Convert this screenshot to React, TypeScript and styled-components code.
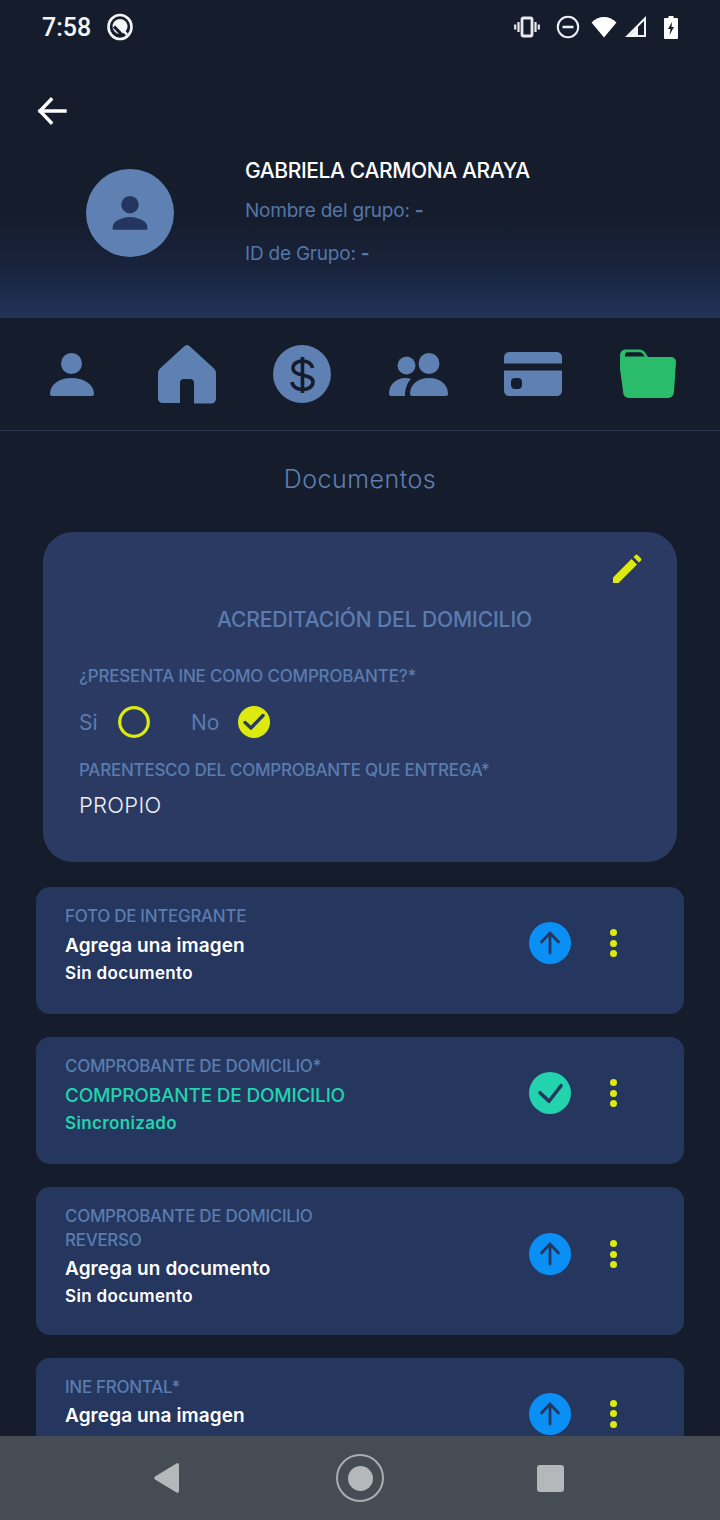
import React from "react";
import styled, { createGlobalStyle } from "styled-components";

const Global = createGlobalStyle`
  html, body { margin: 0; padding: 0; background: #151c2c; }
  * { box-sizing: border-box; }
  body { font-family: "Inter", "Liberation Sans", sans-serif; }
`;

const Page = styled.div`
  width: 720px; height: 1520px; display: flex; flex-direction: column; overflow: hidden; background: #151c2c;
`;
const Header = styled.header`
  height: 319px; flex: none; display: flex; flex-direction: column;
  background: linear-gradient(180deg, #151c2c 0%, #151c2c 68%, #18233c 84%, #22345a 100%);
  border-bottom: 1px solid #141b2b;
`;
const StatusBar = styled.div`
  height: 54px; flex: none; display: flex; align-items: center; padding: 0 42px 0 42px; color: #fff;
`;
const Time = styled.span`
  font-family: "Roboto", sans-serif; font-size: 25px; font-weight: 500; color: #f4f5f6; width: 65px;
`;
const StatusIcons = styled.div`
  margin-left: auto; display: flex; align-items: center;
`;
const StatusIcon = styled.span<{ $gap: number }>`
  display: flex; margin-left: ${p => p.$gap}px;
`;
const BackButton = styled.div`
  height: 50px; margin-top: 31px; padding-left: 36px; display: flex; align-items: center;
`;
const Profile = styled.div`
  display: flex; padding: 0 0 0 86px; margin-top: 22px;
`;
const Avatar = styled.div`
  width: 88px; height: 88px; margin-top: 12px; border-radius: 50%; background: #5f80b2;
  display: flex; align-items: center; justify-content: center; flex: none;
`;
const ProfileText = styled.div`
  margin-left: 71px; display: flex; flex-direction: column;
`;
const Name = styled.div`
  color: #fff; font-size: 21px; font-weight: 500; line-height: 28px; letter-spacing: -0.37px; height: 28px;
`;
const Meta = styled.div`
  color: #5576a8; font-size: 19px; line-height: 26px; margin-top: 13px; letter-spacing: -0.22px;
  & + & { margin-top: 17px; }
  b { font-weight: 700; }
`;
const Tabs = styled.nav`
  height: 112px; flex: none; display: flex; align-items: flex-start; padding: 25px 36px 0 36px;
  justify-content: space-between; border-bottom: 1px solid #2a3650;
`;
const Tab = styled.div`
  width: 72px; height: 60px; display: flex; align-items: center; justify-content: center;
`;
const Scroll = styled.main`
  flex: 1; min-height: 0; overflow: hidden; display: flex; flex-direction: column; align-items: center;
`;
const Title = styled.h1`
  margin: 32px 0 0; color: #5d7fb2; font-size: 25px; line-height: 32px; font-weight: 300; letter-spacing: 0.5px;
`;
const AddressCard = styled.section`
  position: relative; width: 634px; height: 330px; flex: none; margin-top: 37px; padding: 73px 36px 0;
  background: #2b3a63; border-radius: 30px;
`;
const EditIcon = styled.div`
  position: absolute; top: 21px; right: 34px; width: 32px; height: 32px;
`;
const CardTitle = styled.h2`
  margin: 0; color: #5a7cae; font-size: 21px; line-height: 30px; font-weight: 500; text-align: center; letter-spacing: -0.1px;
  padding-left: 29px;
`;
const FieldLabel = styled.div`
  color: #5a7cae; font-size: 17px; line-height: 22px; font-weight: 500;
`;
const QuestionLabel = styled(FieldLabel)`
  margin-top: 30px; letter-spacing: -0.2px;
`;
const Options = styled.div`
  display: flex; align-items: center; height: 32px; margin-top: 19px;
`;
const Option = styled.div<{ $wide?: boolean }>`
  display: flex; align-items: center; width: 112px; gap: ${p => (p.$wide ? 27 : 19)}px;
  color: #5a7cae; font-size: 21px;
`;
const OptionText = styled.span`
  width: 20px; white-space: nowrap;
`;
const RelationLabel = styled(FieldLabel)`
  margin-top: 21px; letter-spacing: -0.25px;
`;
const Value = styled.div`
  color: #eef1f6; font-size: 22px; line-height: 30px; margin-top: 9px; letter-spacing: 0.3px; font-weight: 300;
`;
const DocList = styled.div`
  width: 648px; flex: none; margin-top: 25px; display: flex; flex-direction: column; gap: 23px;
`;
const DocCard = styled.article`
  background: #25365f; border-radius: 14px; padding: 18px 0 0 29px; display: flex; position: relative;
  min-height: 127px; flex: none;
`;
const DocText = styled.div`
  width: 300px; flex: none; padding-bottom: 25.5px;
`;
const DocLabel = styled.div`
  color: #5a7cae; font-size: 17px; line-height: 23.5px; font-weight: 500; letter-spacing: -0.3px; white-space: nowrap;
`;
const DocTitle = styled.div<{ $ok?: boolean }>`
  color: ${p => (p.$ok ? "#22d3ae" : "#fff")}; font-size: 19px; line-height: 28px; font-weight: ${p => (p.$ok ? 500 : 600)}; margin-top: 3px; white-space: nowrap;
  letter-spacing: ${p => (p.$ok ? -0.2 : 0.1)}px;
`;
const DocState = styled.div<{ $ok?: boolean }>`
  color: ${p => (p.$ok ? "#22d3ae" : "#fff")}; font-size: 17px; line-height: 26px; font-weight: 600; letter-spacing: 0.35px;
`;
const Actions = styled.div<{ $top: number }>`
  position: absolute; top: ${p => p.$top}px; left: 493px; display: flex; align-items: center; gap: 39px;
`;
const StatusCircle = styled.div<{ $ok?: boolean }>`
  width: 42px; height: 42px; border-radius: 50%; background: ${p => (p.$ok ? "#22d3ae" : "#0a90f5")};
  display: flex; align-items: center; justify-content: center;
`;
const Dots = styled.div`
  display: flex; flex-direction: column; gap: 3.5px;
  span { width: 7px; height: 7px; border-radius: 50%; background: #dcea10; display: block; }
`;
const NavBar = styled.div`
  height: 84px; flex: none; background: #454c53; display: flex; align-items: center; padding-left: 154px; position: relative;
`;
const NavBack = styled.div`
  width: 25px; display: flex;
`;
const NavHome = styled.div`
  margin-left: 157px; width: 48px; height: 48px; border-radius: 50%; border: 2.5px solid #a9aeb1;
  display: flex; align-items: center; justify-content: center;
`;
const NavHomeDot = styled.div`
  width: 25px; height: 25px; border-radius: 50%; background: #b4b8ba;
`;
const NavSquare = styled.div`
  margin-left: 153px; width: 27px; height: 27px; border-radius: 3px; background: #b4b8ba;
`;

const Blue = "#5f80b2";

const docs: { label: string[]; title: string; state?: string; ok?: boolean; top: number }[] = [
  { label: ["FOTO DE INTEGRANTE"], title: "Agrega una imagen", state: "Sin documento", top: 35 },
  { label: ["COMPROBANTE DE DOMICILIO*"], title: "COMPROBANTE DE DOMICILIO", state: "Sincronizado", ok: true, top: 35 },
  { label: ["COMPROBANTE DE DOMICILIO", "REVERSO"], title: "Agrega un documento", state: "Sin documento", top: 46 },
  { label: ["INE FRONTAL*"], title: "Agrega una imagen", top: 35 },
];

export default function App() {
  return (
    <Page>
      <Global />
      <Header>
        <StatusBar>
          <Time>7:58</Time>
          <svg width="26" height="28" viewBox="0 0 26 28" fill="none">
            <ellipse cx="13" cy="14" rx="11.500" ry="12" stroke="#f4f5f6" strokeWidth="2.600" />
            <circle cx="13" cy="13.500" r="7.500" fill="#f4f5f6" />
            <path d="M7 13.500 16 23" stroke="#151c2c" strokeWidth="3.200" />
            <path d="M11.500 13 20 21.500" stroke="#f4f5f6" strokeWidth="2.500" />
          </svg>
          <StatusIcons>
            <StatusIcon $gap={0}>
              <svg width="26" height="24" viewBox="0 0 26 24" fill="none" stroke="#e8eaee" strokeWidth="2.200">
                <rect x="8" y="3" width="10" height="18" rx="1.500" strokeWidth="2.800" />
                <path d="M4.500 7v10M1.200 9.500v5M21.500 7v10M24.800 9.500v5" />
              </svg>
            </StatusIcon>
            <StatusIcon $gap={16}>
              <svg width="24" height="24" viewBox="0 0 24 24" fill="none" stroke="#f0f1f4" strokeWidth="2">
                <circle cx="12" cy="12" r="10.200" />
                <path d="M6.500 12h11" strokeWidth="2.500" />
              </svg>
            </StatusIcon>
            <StatusIcon $gap={11}>
              <svg width="26" height="22" viewBox="0 0 26 22">
                <path d="M13 21.500 0.500 6.500C4 3 8 1 13 1s9 2 12.500 5.500Z" fill="#fff" />
              </svg>
            </StatusIcon>
            <StatusIcon $gap={8}>
              <svg width="22" height="22" viewBox="0 0 22 22" fill="none">
                <path d="M20 2.500V20H2.500Z" stroke="#f4f5f6" strokeWidth="2" />
                <path d="M13 10 3 21h10Z" fill="#f4f5f6" />
              </svg>
            </StatusIcon>
            <StatusIcon $gap={17}>
              <svg width="14" height="24" viewBox="0 0 14 24">
                <path d="M4.500 1h5v2H13a1 1 0 0 1 1 1v19a1 1 0 0 1-1 1H1a1 1 0 0 1-1-1V4a1 1 0 0 1 1-1h3.500Z" fill="#fff" />
                <path d="M8 7 4 14h2.500L5.500 20 10 12H7.500Z" fill="#151c2c" />
              </svg>
            </StatusIcon>
          </StatusIcons>
        </StatusBar>
        <BackButton>
          <svg width="34" height="34" viewBox="0 0 34 34" fill="none" stroke="#fff" strokeWidth="3.400" strokeLinecap="square">
            <path d="M4 18h25M15 6.500 4 18l11 11.500" />
          </svg>
        </BackButton>
        <Profile>
          <Avatar>
            <svg width="50" height="50" viewBox="0 0 24 24" fill="#243660">
              <circle cx="12" cy="8" r="4.200" />
              <path d="M3.700 20v-1.500c0-3 5.500-4.600 8.300-4.600s8.300 1.600 8.300 4.600V20Z" />
            </svg>
          </Avatar>
          <ProfileText>
            <Name>GABRIELA CARMONA ARAYA</Name>
            <Meta>Nombre del grupo: <b>-</b></Meta>
            <Meta>ID de Grupo: <b>-</b></Meta>
          </ProfileText>
        </Profile>
      </Header>
      <Tabs>
        <Tab>
          <svg width="46" height="46" viewBox="0 0 46 46" fill={Blue}>
            <circle cx="22.500" cy="12.500" r="10.500" />
            <path d="M1 43c0-9 8-16 21.500-16S45 34 45 43c0 1-1 2-2 2H3c-1 0-2-1-2-2Z" />
          </svg>
        </Tab>
        <Tab>
          <svg width="60" height="60" viewBox="0 0 60 60" fill={Blue}>
            <path fillRule="evenodd" d="M30 1c1 0 2 .5 3 1.500l24 22c1.500 1.500 2 3 2 5v25c0 3-2 5-5 5H37V39c0-2.500-1.500-4-4-4h-6c-2.500 0-4 1.500-4 4v20H6c-3 0-5-2-5-5V29.500c0-2 .5-3.500 2-5l24-22c1-1 2-1.500 3-1.500Z" />
          </svg>
        </Tab>
        <Tab>
          <svg width="60" height="60" viewBox="0 0 60 60">
            <circle cx="30" cy="30" r="29" fill={Blue} />
            <path d="M40.500 24c-.5-4-4.500-7-10-7-5.500 0-9.500 3-9.500 7 0 9.500 20 5 20 14 0 4.500-4.500 7.500-10.500 7.500-5.500 0-10-3-10.500-7.500M30.500 13v36" fill="none" stroke="#151c2c" strokeWidth="3.600" />
          </svg>
        </Tab>
        <Tab>
          <svg width="60" height="48" viewBox="0 0 60 48" fill={Blue}>
            <circle cx="41" cy="13.500" r="10.500" />
            <circle cx="18.500" cy="15.500" r="9" />
            <path d="M1 44c0-9 6-15 15-16 2 0 5 0 7 1-4 4-6 10-6 16 0 .5 0 1 .2 1H3c-1 0-2-1-2-2Z" />
            <path d="M22 44c0-9 7-16 19-16s19 7 19 16c0 1-1 2-2 2H24c-1 0-2-1-2-2Z" />
          </svg>
        </Tab>
        <Tab>
          <svg width="60" height="46" viewBox="0 0 60 46" fill={Blue}>
            <path d="M1 12.500V7c0-4 2-6 6-6h46c4 0 6 2 6 6v5.500Z" />
            <path fillRule="evenodd" d="M1 19.500h58V39c0 4-2 6-6 6H7c-4 0-6-2-6-6Zm11 7.500c-2.500 0-4 1.500-4 4v3c0 2.500 1.500 4 4 4h3c2.500 0 4-1.500 4-4v-3c0-2.500-1.500-4-4-4Z" />
          </svg>
        </Tab>
        <Tab>
          <svg width="58" height="50" viewBox="0 0 58 50" fill="#2abb6b">
            <path fillRule="evenodd" d="M1 14V7C1 3 3 .5 7 .5h13c3 0 4.500 1 6 3L29 8h22c4 0 6 2 6 5l-2 29c0 4-2 7-6 7H10c-4 0-6-3-6-7L1 20Zm5-6.500h20l-2.500-3c-1-1-2-1.200-3.500-1.200H8c-1.200 0-2 1-2 4.200Z" />
          </svg>
        </Tab>
      </Tabs>
      <Scroll>
        <Title>Documentos</Title>
        <AddressCard>
          <EditIcon>
            <svg width="32" height="32" viewBox="0 0 32 32" fill="#dcea10">
              <path d="M2 24.500 20.500 6l5.500 5.500L7.500 30H2Z" />
              <path d="M22.500 4l2-2a1.500 1.500 0 0 1 2 0l3.500 3.500a1.500 1.500 0 0 1 0 2l-2 2Z" />
            </svg>
          </EditIcon>
          <CardTitle>ACREDITACIÓN DEL DOMICILIO</CardTitle>
          <QuestionLabel>¿PRESENTA INE COMO COMPROBANTE?*</QuestionLabel>
          <Options>
            <Option>
              <OptionText>Si</OptionText>
              <svg width="32" height="32" viewBox="0 0 32 32" fill="none">
                <circle cx="16" cy="16" r="14.300" stroke="#dcea10" strokeWidth="3.200" />
              </svg>
            </Option>
            <Option $wide>
              <OptionText>No</OptionText>
              <svg width="32" height="32" viewBox="0 0 32 32">
                <circle cx="16" cy="16" r="16" fill="#dcea10" />
                <path d="M7 16.500 13 22 25 9.500" fill="none" stroke="#2b3a63" strokeWidth="3.400" strokeLinecap="round" strokeLinejoin="round" />
              </svg>
            </Option>
          </Options>
          <RelationLabel>PARENTESCO DEL COMPROBANTE QUE ENTREGA*</RelationLabel>
          <Value>PROPIO</Value>
        </AddressCard>
        <DocList>
          {docs.map((d, i) => (
            <DocCard key={i}>
              <DocText>
                <DocLabel>{d.label.map(l => <div key={l}>{l}</div>)}</DocLabel>
                <DocTitle $ok={d.ok}>{d.title}</DocTitle>
                {d.state && <DocState $ok={d.ok}>{d.state}</DocState>}
              </DocText>
              <Actions $top={d.top}>
                <StatusCircle $ok={d.ok}>
                  {d.ok ? (
                    <svg width="42" height="42" viewBox="0 0 42 42" fill="none" stroke="#25365f" strokeWidth="3.500" strokeLinecap="round" strokeLinejoin="round">
                      <path d="M11 20.700 20 29.300 32 13.700" />
                    </svg>
                  ) : (
                    <svg width="42" height="42" viewBox="0 0 42 42" fill="none" stroke="#25365f" strokeWidth="2.800" strokeLinecap="round" strokeLinejoin="round">
                      <path d="M21 31V11M12.500 20 21 11l8.500 9" />
                    </svg>
                  )}
                </StatusCircle>
                <Dots><span /><span /><span /></Dots>
              </Actions>
            </DocCard>
          ))}
        </DocList>
      </Scroll>
      <NavBar>
        <NavBack>
          <svg width="25" height="30" viewBox="0 0 25 30" fill="#b4b8ba">
            <path d="M22.500 .5 1 13.500c-1 .7-1 2.300 0 3l21.500 13c1 .5 2.500 0 2.500-1V1.500c0-1-1.500-1.500-2.500-1Z" />
          </svg>
        </NavBack>
        <NavHome><NavHomeDot /></NavHome>
        <NavSquare />
      </NavBar>
    </Page>
  );
}
